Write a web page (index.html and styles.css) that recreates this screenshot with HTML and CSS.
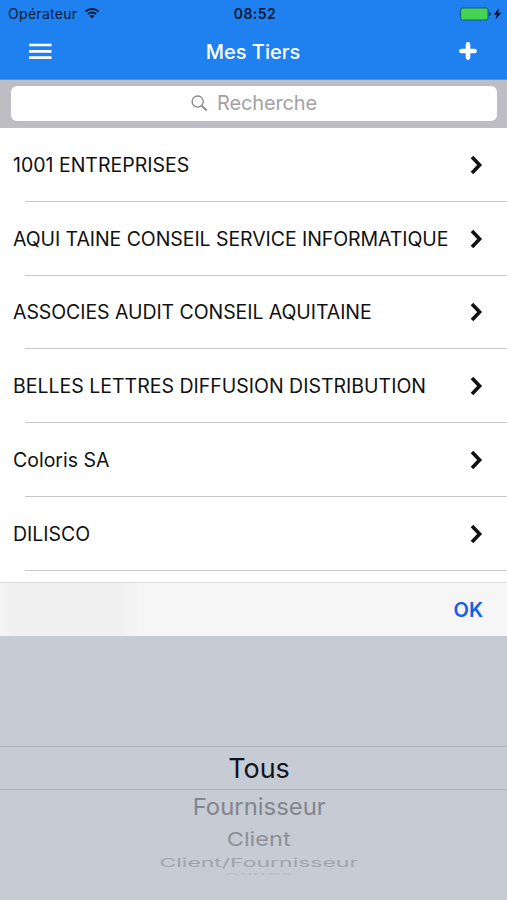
FILE: index.html
```html
<!DOCTYPE html>
<html lang="fr">
<head>
  <meta charset="UTF-8" />
  <meta name="viewport" content="width=device-width, initial-scale=1" />
  <title>Mes Tiers</title>
  <link rel="stylesheet" href="styles.css">
</head>
<body>

  <header class="header">
    <div class="status-bar">
      <div class="carrier">
        <span>Opérateur</span>
        <svg class="wifi" width="16" height="12" viewBox="0 0 16 12">
          <path d="M1.4 4.6a9.4 9.4 0 0 1 13.2 0M3.9 7.1a5.9 5.9 0 0 1 8.2 0" fill="none" stroke="#061a33" stroke-width="2" />
          <path d="M8 11.6L5.5 9.1a3.6 3.6 0 0 1 5 0z" fill="#061a33" />
        </svg>
      </div>
      <span class="clock">08:52</span>
      <div class="power">
        <svg width="42" height="14" viewBox="0 0 42 14">
          <rect x="0.6" y="1" width="27.4" height="12" rx="2" fill="#43d551" stroke="#145a78" stroke-width="1" />
          <path d="M29 5.2q2 .2 2 1.8t-2 1.8z" fill="#0b2b55" />
          <path d="M38.8 1.2L33.8 7.8h3L35.4 12.8l5.9-7.1h-3z" fill="#04122a" />
        </svg>
      </div>
    </div>
    <nav class="nav-bar">
      <svg class="menu-icon" width="23" height="17" viewBox="0 0 23 17">
        <path d="M0 2h22.5M0 8.4h22.5M0 14.6h22.5" stroke="#fff" stroke-width="2.6" />
      </svg>
      <h1 class="title">Mes Tiers</h1>
      <svg class="add-icon" width="18" height="18" viewBox="0 0 18 18">
        <path d="M9 2.4v13.2M2.4 9h13.2" stroke="#fff" stroke-width="4.6" stroke-linecap="round" />
      </svg>
    </nav>
  </header>

  <div class="search-bar">
    <div class="search-field">
      <svg width="17" height="17" viewBox="0 0 17 17">
        <circle cx="6.7" cy="6.6" r="5.6" fill="none" stroke="#85858a" stroke-width="1.3" />
        <path d="M10.8 10.8l5 4.7" stroke="#85858a" stroke-width="1.8" />
      </svg>
      <span>Recherche</span>
    </div>
  </div>

  <ul class="list">
    <li class="row"><span class="name">1001 ENTREPRISES</span><svg class="chevron" viewBox="0 0 13 20"><path d="M2 2l7.6 8L2 18" /></svg></li>
    <li class="row"><span class="name tight">AQUI TAINE CONSEIL SERVICE INFORMATIQUE</span><svg class="chevron" viewBox="0 0 13 20"><path d="M2 2l7.6 8L2 18" /></svg></li>
    <li class="row"><span class="name tight">ASSOCIES AUDIT CONSEIL AQUITAINE</span><svg class="chevron" viewBox="0 0 13 20"><path d="M2 2l7.6 8L2 18" /></svg></li>
    <li class="row"><span class="name">BELLES LETTRES DIFFUSION DISTRIBUTION</span><svg class="chevron" viewBox="0 0 13 20"><path d="M2 2l7.6 8L2 18" /></svg></li>
    <li class="row"><span class="name">Coloris SA</span><svg class="chevron" viewBox="0 0 13 20"><path d="M2 2l7.6 8L2 18" /></svg></li>
    <li class="row"><span class="name">DILISCO</span><svg class="chevron" viewBox="0 0 13 20"><path d="M2 2l7.6 8L2 18" /></svg></li>
  </ul>

  <div class="toolbar">
    <span class="ok">OK</span>
  </div>

  <div class="picker">
    <div class="option selected"><span>Tous</span></div>
    <div class="option next-1"><span>Fournisseur</span></div>
    <div class="option next-2"><span>Client</span></div>
    <div class="option next-3"><span>Client/Fournisseur</span></div>
    <div class="option next-4"><span>Autres</span></div>
  </div>

</body>
</html>
```
FILE: styles.css
```css
* {
  box-sizing: border-box;
}

body {
  margin: 0;
  height: 900px;
  overflow: hidden;
  display: flex;
  flex-direction: column;
  background-color: #fff;
  color: #111;
  font-family: Inter, "Liberation Sans", sans-serif;
}

svg {
  display: block;
  flex: none;
}

.header {
  flex: none;
  height: 80px;
  background-color: #1f80f0;
  border-bottom: 1px solid #5b94d4;
}

.status-bar {
  display: grid;
  grid-template-columns: 1fr auto 1fr;
  align-items: center;
  height: 27px;
  padding: 0 5px 0 8px;
  color: #061a33;
  font-size: 14px;
}

.carrier {
  display: flex;
  align-items: center;
  gap: 7px;
  letter-spacing: 0.3px;
}

.wifi {
  margin-top: -2px;
}

.clock {
  font-weight: 600;
  letter-spacing: 0.5px;
}

.power {
  display: flex;
  justify-content: flex-end;
}

.nav-bar {
  display: grid;
  grid-template-columns: 1fr auto 1fr;
  align-items: center;
  height: 50px;
  padding: 0 30px 0 29px;
}

.menu-icon {
  margin-top: -2px;
}

.title {
  margin: 0;
  color: #fff;
  font-size: 20px;
  font-weight: 500;
}

.add-icon {
  justify-self: end;
  margin-top: -3px;
}

.search-bar {
  flex: none;
  height: 48px;
  padding: 6px 10px 7px 11px;
  background-color: #bdbdc3;
}

.search-field {
  display: flex;
  align-items: center;
  justify-content: center;
  gap: 9px;
  height: 35px;
  padding-bottom: 1px;
  border-radius: 6px;
  background-color: #fff;
  color: #a2a2a5;
  font-size: 20px;
  letter-spacing: -0.15px;
}

.list {
  flex: none;
  height: 454px;
  margin: 0;
  padding: 0;
  list-style: none;
}

.row {
  display: flex;
  align-items: center;
  justify-content: space-between;
  height: 73.75px;
  padding: 0 24px 0 13px;
  background: linear-gradient(#c8c8cb, #c8c8cb) 25px 100% / 100% 1px no-repeat;
  font-size: 19.5px;
  white-space: nowrap;
}

.tight {
  letter-spacing: -0.07px;
}

.chevron {
  width: 13px;
  height: 20px;
  fill: none;
  stroke: #111;
  stroke-width: 3.6;
}

.toolbar {
  flex: none;
  display: flex;
  align-items: center;
  justify-content: flex-end;
  height: 54px;
  padding-right: 24px;
  border-top: 1px solid #dcdcdd;
  background: linear-gradient(90deg, #f5f5f6, #f0f0f1 14px, #f0f0f1 120px, #f6f6f7 140px);
}

.ok {
  color: #145fe6;
  font-size: 20px;
  font-weight: 600;
}

.picker {
  flex: 1;
  padding-top: 110px;
  background-color: #c7cbd4;
  font-size: 27px;
}

.option {
  display: flex;
  align-items: center;
  justify-content: center;
  padding-left: 11px;
  white-space: nowrap;
}

.selected {
  height: 44px;
  border-top: 1px solid #aeb2ba;
  border-bottom: 1px solid #aeb2ba;
  color: #12151b;
}

.next-1 {
  height: 33px;
  color: #82868e;
}

.next-1 span {
  transform: scale(0.885, 0.86);
}

.next-2 {
  height: 32px;
  color: #8c9098;
}

.next-2 span {
  transform: scale(0.87, 0.7);
}

.next-3 {
  height: 15px;
  color: #a0a4ac;
}

.next-3 span {
  transform: scale(0.85, 0.44);
}

.next-4 {
  height: 8px;
  color: #b4b8c0;
}

.next-4 span {
  transform: scale(0.82, 0.1);
}
```
